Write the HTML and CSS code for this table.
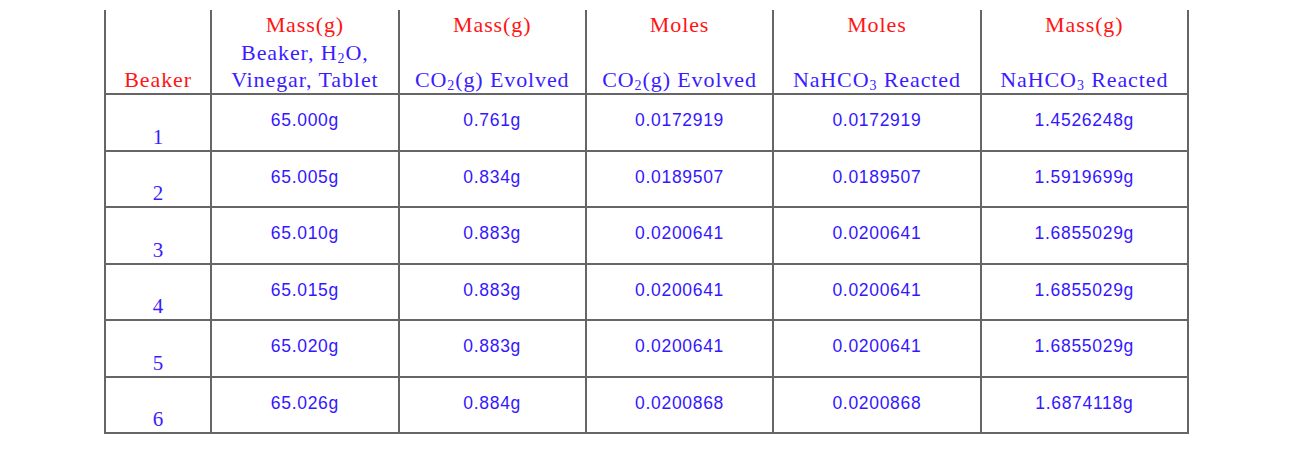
FILE: index.html
```
<html>
<head>
    <title>Lab Data</title>
    <link rel="stylesheet" href="styles.css">
</head>
<body>
    <table class="data">
        <colgroup>
            <col class="c-beaker">
            <col class="c-a">
            <col class="c-a">
            <col class="c-a">
            <col class="c-b">
            <col class="c-b">
        </colgroup>
        <thead>
            <tr>
                <th><span class="red">&nbsp;</span><span>&nbsp;</span><span class="red">Beaker</span></th>
                <th><span class="red">Mass(g)</span><span class="blue">Beaker, H<sub>2</sub>O,</span><span class="blue">Vinegar, Tablet</span></th>
                <th><span class="red">Mass(g)</span><span>&nbsp;</span><span class="blue">CO<sub>2</sub>(g) Evolved</span></th>
                <th><span class="red">Moles</span><span>&nbsp;</span><span class="blue">CO<sub>2</sub>(g) Evolved</span></th>
                <th><span class="red">Moles</span><span>&nbsp;</span><span class="blue">NaHCO<sub>3</sub> Reacted</span></th>
                <th><span class="red">Mass(g)</span><span>&nbsp;</span><span class="blue">NaHCO<sub>3</sub> Reacted</span></th>
            </tr>
        </thead>
        <tbody>
            <tr>
                <td class="num">1</td>
                <td>65.000g</td>
                <td>0.761g</td>
                <td>0.0172919</td>
                <td>0.0172919</td>
                <td>1.4526248g</td>
            </tr>
            <tr>
                <td class="num">2</td>
                <td>65.005g</td>
                <td>0.834g</td>
                <td>0.0189507</td>
                <td>0.0189507</td>
                <td>1.5919699g</td>
            </tr>
            <tr>
                <td class="num">3</td>
                <td>65.010g</td>
                <td>0.883g</td>
                <td>0.0200641</td>
                <td>0.0200641</td>
                <td>1.6855029g</td>
            </tr>
            <tr>
                <td class="num">4</td>
                <td>65.015g</td>
                <td>0.883g</td>
                <td>0.0200641</td>
                <td>0.0200641</td>
                <td>1.6855029g</td>
            </tr>
            <tr>
                <td class="num">5</td>
                <td>65.020g</td>
                <td>0.883g</td>
                <td>0.0200641</td>
                <td>0.0200641</td>
                <td>1.6855029g</td>
            </tr>
            <tr>
                <td class="num">6</td>
                <td>65.026g</td>
                <td>0.884g</td>
                <td>0.0200868</td>
                <td>0.0200868</td>
                <td>1.6874118g</td>
            </tr>
        </tbody>
    </table>
</body>
</html>
```

FILE: styles.css
```
body {
    margin: 0;
    background: #fff;
    padding: 10px 0 0 104px;
}
.data {
    border-collapse: collapse;
    table-layout: fixed;
    width: 1085px;
    border-bottom: 2px solid #666;
}
.c-beaker { width: 106px; }
.c-a { width: 187px; }
.c-b { width: 207px; }
.data th,
.data td {
    border-left: 2px solid #666;
    border-right: 2px solid #666;
    text-align: center;
    padding: 0;
}
.data th {
    height: 81px;
    border-bottom: 2px solid #666;
    font-family: "Liberation Serif", "Times New Roman", serif;
    font-weight: normal;
    font-size: 22px;
    letter-spacing: 0.9px;
    vertical-align: top;
    padding-top: 1px;
}
.data th span {
    display: block;
    height: 27.5px;
    line-height: 27.5px;
    white-space: nowrap;
}
.data th span:last-child {
    height: 27px;
}
.data th sub {
    font-size: 14px;
    vertical-align: -3px;
    line-height: 0;
}
.red { color: #ff1414; }
.blue { color: #3b1cff; }
.data td {
    height: 56.5px;
    border-top: 2px solid #666;
    font-family: "Liberation Sans", Arial, sans-serif;
    font-size: 17.5px;
    letter-spacing: 0.7px;
    color: #3416ff;
    vertical-align: top;
    padding-top: 15px;
    box-sizing: border-box;
}
.data td.num {
    font-family: "Liberation Serif", "Times New Roman", serif;
    font-size: 21px;
    line-height: 21px;
    letter-spacing: 0;
    color: #3b1cff;
    vertical-align: bottom;
    padding: 0 0 2px;
}
```
